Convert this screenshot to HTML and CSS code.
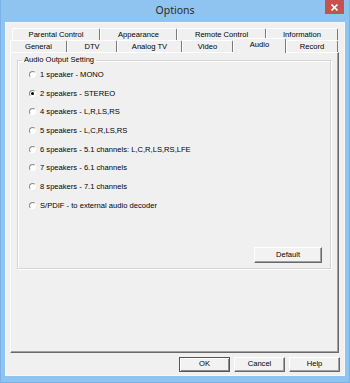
FILE: index.html
```html
<!DOCTYPE html>
<html lang="en">
<head>
    <meta charset="UTF-8">
    <title>Options</title>
    <link rel="stylesheet" href="styles.css">
</head>
<body>
    <div class="window">
        <div class="titlebar">
            <span></span>
            <span class="title">Options</span>
            <span class="close">
                <svg width="7" height="7" viewBox="0 0 7 7"><path d="M0.5 0.5L6.5 6.5M6.5 0.5L0.5 6.5" stroke="#fff" stroke-width="1.6" fill="none"/></svg>
            </span>
        </div>
        <div class="client">
            <div class="tabs">
                <div class="tab-row back">
                    <div class="tab w88">Parental Control</div>
                    <div class="tab w77">Appearance</div>
                    <div class="tab w89">Remote Control</div>
                    <div class="tab w72">Information</div>
                </div>
                <div class="tab-row front">
                    <div class="tab w57">General</div>
                    <div class="tab w50">DTV</div>
                    <div class="tab w65">Analog TV</div>
                    <div class="tab w51">Video</div>
                    <div class="tab w53 selected">Audio</div>
                    <div class="tab w52">Record</div>
                </div>
            </div>
            <div class="panel">
                <fieldset class="group">
                    <legend>Audio Output Setting</legend>
                    <div class="options">
                        <div class="radio"><span class="circle"></span>1 speaker - MONO</div>
                        <div class="radio"><span class="circle checked"></span>2 speakers - STEREO</div>
                        <div class="radio"><span class="circle"></span>4 speakers - L,R,LS,RS</div>
                        <div class="radio"><span class="circle"></span>5 speakers - L,C,R,LS,RS</div>
                        <div class="radio"><span class="circle"></span>6 speakers - 5.1 channels: L,C,R,LS,RS,LFE</div>
                        <div class="radio"><span class="circle"></span>7 speakers - 6.1 channels</div>
                        <div class="radio"><span class="circle"></span>8 speakers - 7.1 channels</div>
                        <div class="radio"><span class="circle"></span>S/PDIF - to external audio decoder</div>
                    </div>
                    <div class="group-foot">
                        <div class="btn default-btn">Default</div>
                    </div>
                </fieldset>
            </div>
            <div class="actions">
                <div class="btn primary">OK</div>
                <div class="btn">Cancel</div>
                <div class="btn">Help</div>
            </div>
        </div>
    </div>
</body>
</html>
```
FILE: styles.css
```css
body{
    margin:0;
    font-family:"Liberation Sans", Arial, sans-serif;
    font-size:7.6px;
    color:#000;
}
.window{
    width:350px;
    height:383px;
    background:#8fc4f1;
    box-sizing:border-box;
    border-left:1px solid #78b2e6;
    border-right:1px solid #78b2e6;
    border-bottom:1px solid #78b2e6;
    display:flex;
    flex-direction:column;
}
.titlebar{
    height:22px;
    display:grid;
    grid-template-columns:24px 1fr 24px;
}
.title{
    text-align:center;
    font-family:"Noto Sans", "Open Sans", sans-serif;
    font-size:10.5px;
    line-height:21px;
    color:#2a2a2a;
}
.close{
    width:19px;
    height:14px;
    background:#c75050;
    display:flex;
    align-items:center;
    justify-content:center;
}
.client{
    margin:0 4px;
    height:354px;
    background:#f0f0f0;
    box-sizing:border-box;
    border:1px solid #f7f7f7;
    padding:5px 0 0 4px;
}
.tab-row{
    display:flex;
    height:12px;
}
.tab-row.back{
    margin-left:2px;
}
.tab{
    box-sizing:border-box;
    height:12px;
    line-height:11px;
    text-align:center;
    border-top:1px solid #fff;
    border-left:1px solid #fff;
    border-right:1px solid #7a7a7a;
    border-radius:2px 2px 0 0;
    background:#f0f0f0;
}
.tab.selected{
    height:15px;
    margin-top:-2px;
    line-height:11px;
    position:relative;
    z-index:1;
}
.w88{width:88px}
.w77{width:77px}
.w89{width:89px}
.w72{width:72px}
.w57{width:57px}
.w50{width:50px}
.w65{width:65px}
.w51{width:51px}
.w53{width:53px}
.w52{width:52px}
.panel{
    width:329px;
    height:301px;
    box-sizing:border-box;
    border:1px solid;
    border-color:#fff #696969 #696969 #fff;
    box-shadow:inset -1px -1px 0 #a0a0a0;
    padding:2px 0 0 6px;
}
.group{
    margin:0;
    width:314px;
    height:214px;
    box-sizing:border-box;
    border:1px solid #d5d5d5;
    box-shadow:1px 1px 0 #fff, inset 1px 1px 0 #fff;
    padding:0 0 5px 4px;
    display:flex;
    flex-direction:column;
}
.group legend{
    padding:0 2px;
    line-height:10px;
}
.options{
    margin-top:0;
}
.radio{
    height:18.7px;
    display:flex;
    align-items:center;
}
.circle{
    width:7px;
    height:7px;
    box-sizing:border-box;
    margin:0 4px 0 7px;
    border-radius:50%;
    border:1px solid;
    border-color:#8a8a8a #fff #fff #8a8a8a;
    background:#fff;
    display:flex;
    align-items:center;
    justify-content:center;
}
.circle.checked::after{
    content:"";
    width:3px;
    height:3px;
    border-radius:50%;
    background:#000;
}
.group-foot{
    margin-top:auto;
    display:flex;
    justify-content:flex-end;
    padding-right:8px;
}
.btn{
    box-sizing:border-box;
    height:15px;
    line-height:12px;
    text-align:center;
    background:#f2f2f2;
    border:1px solid;
    border-color:#fff #696969 #696969 #fff;
    box-shadow:inset -1px -1px 0 #a0a0a0;
}
.default-btn{
    width:68px;
    height:16px;
    line-height:13px;
}
.actions{
    display:flex;
    justify-content:flex-end;
    gap:4px;
    margin-top:4px;
    padding-right:4px;
}
.actions .btn{
    width:51px;
}
.btn.primary{
    border-color:#555;
    box-shadow:inset 1px 1px 0 #fff, inset -1px -1px 0 #8a8a8a;
}
```
